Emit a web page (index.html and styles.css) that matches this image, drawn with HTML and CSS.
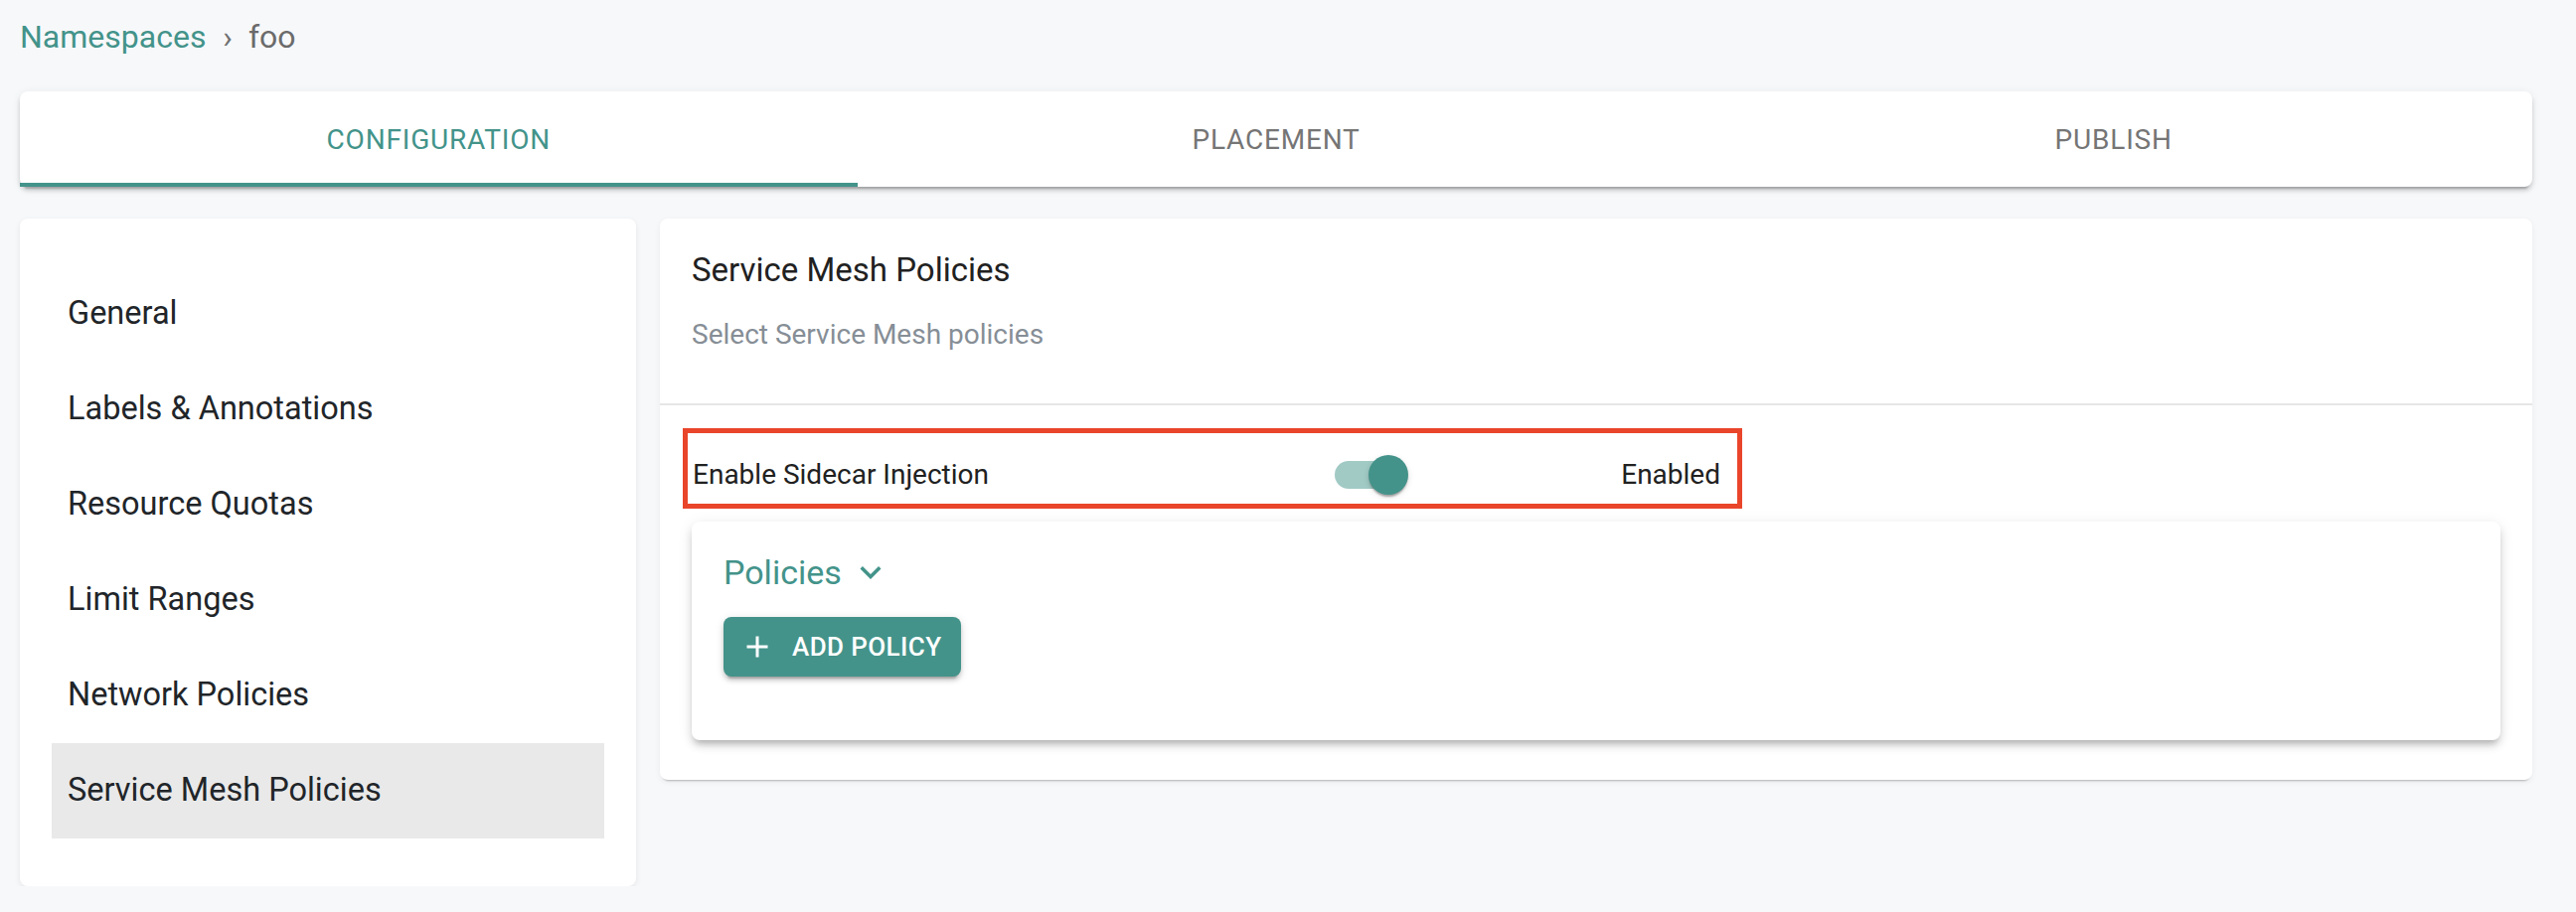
FILE: index.html
```html
<!DOCTYPE html>
<html lang="en">
<head>
    <meta charset="UTF-8">
    <title>Namespace foo</title>
    <link rel="stylesheet" href="styles.css">
</head>
<body>

<div class="page">

    <!-- Breadcrumb -->
    <nav class="crumbs">
        <a href="#">Namespaces</a>
        <span class="sep">›</span>
        <span class="current">foo</span>
    </nav>

    <!-- Wizard tabs -->
    <div class="tabs">
        <div class="tab active">Configuration</div>
        <div class="tab">Placement</div>
        <div class="tab">Publish</div>
    </div>

    <div class="layout">
        <!-- Section menu -->
        <aside class="side-nav">
            <ul>
                <li>General</li>
                <li>Labels &amp; Annotations</li>
                <li>Resource Quotas</li>
                <li>Limit Ranges</li>
                <li>Network Policies</li>
                <li class="selected">Service Mesh Policies</li>
            </ul>
        </aside>

        <!-- Service mesh panel -->
        <section class="panel">
            <div class="panel-head">
                <h2>Service Mesh Policies</h2>
                <p>Select Service Mesh policies</p>
            </div>
            <div class="panel-body">
                <div class="sidecar-row">
                    <span class="sidecar-label">Enable Sidecar Injection</span>
                    <span class="switch"><span class="switch-thumb"></span></span>
                    <span class="sidecar-value">Enabled</span>
                </div>

                <div class="policies-card">
                    <div class="policies-head">
                        <span>Policies</span>
                        <svg class="chevron" viewBox="0 0 24 24"><path d="M16.59 8.59 12 13.17 7.41 8.59 6 10l6 6 6-6z"/></svg>
                    </div>
                    <button class="add-btn" type="button">
                        <svg viewBox="0 0 24 24"><path d="M19 13h-6v6h-2v-6H5v-2h6V5h2v6h6v2z"/></svg>
                        Add Policy
                    </button>
                </div>
            </div>
        </section>
    </div>

</div>

</body>
</html>
```

FILE: styles.css
```css
body {
    margin: 0;
    font-family: Roboto, "Liberation Sans", sans-serif;
    background-color: #f7f8fa;
    color: #212529;
}

.page {
    padding: 17px 44px 0 20px;
}

/* Breadcrumb */
.crumbs {
    font-size: 32px;
    line-height: 40px;
    margin-bottom: 35px;
    color: #6b6b6b;
}

.crumbs a {
    color: #43938a;
    text-decoration: none;
}

.crumbs .sep {
    margin: 0 8px 0 9px;
    color: #707070;
}

/* Tabs */
.tabs {
    display: flex;
    background: #fff;
    border-radius: 8px;
    box-shadow: 0 6px 2px -4px rgba(0, 0, 0, 0.2), 0 4px 4px 0 rgba(0, 0, 0, 0.14), 0 2px 10px 0 rgba(0, 0, 0, 0.08);
    margin-bottom: 32px;
}

.tab {
    flex: 1;
    height: 96px;
    box-sizing: border-box;
    padding-top: 4px;
    border-bottom: 4px solid transparent;
    display: flex;
    align-items: center;
    justify-content: center;
    font-size: 28px;
    letter-spacing: 0.8px;
    text-transform: uppercase;
    color: #757575;
}

.tab.active {
    color: #43938a;
    border-bottom-color: #43938a;
}

/* Layout */
.layout {
    display: flex;
    gap: 24px;
    align-items: flex-start;
}

/* Side menu */
.side-nav {
    width: 620px;
    flex: none;
    background: #fff;
    border-radius: 8px;
    box-shadow: 0 2px 6px rgba(0, 0, 0, 0.08);
}

.side-nav ul {
    list-style: none;
    margin: 0;
    padding: 48px 32px;
}

.side-nav li {
    height: 96px;
    display: flex;
    align-items: center;
    padding: 0 0 2px 16px;
    box-sizing: border-box;
    font-size: 32.5px;
}

.side-nav li.selected {
    background: #e9e9e9;
}

/* Panel */
.panel {
    flex: 1;
    background: #fff;
    border-radius: 8px;
    box-shadow: 0 4px 2px -3px rgba(0, 0, 0, 0.25), 0 2px 6px rgba(0, 0, 0, 0.06);
}

.panel-head {
    padding: 32px 32px 51px;
    border-bottom: 2px solid #e6e6e6;
}

.panel-head h2 {
    margin: 0;
    font-size: 33px;
    font-weight: 400;
    line-height: 40px;
    color: #212121;
}

.panel-head p {
    margin: 27px 0 0;
    font-size: 28px;
    line-height: 36px;
    color: #868e96;
}

.panel-body {
    padding: 23px 32px 40px;
}

/* Highlighted sidecar row */
.sidecar-row {
    margin-left: -9px;
    width: 1066px;
    height: 81px;
    box-sizing: border-box;
    border: 5px solid #e9452b;
    padding: 12px 17px 0 5px;
    display: flex;
    align-items: center;
    font-size: 28px;
    color: #212121;
}

.sidecar-label {
    width: 646px;
    flex: none;
}

.switch {
    position: relative;
    width: 68px;
    height: 28px;
    border-radius: 14px;
    background: #a1cac5;
}

.switch-thumb {
    position: absolute;
    top: -6px;
    left: 34px;
    width: 40px;
    height: 40px;
    border-radius: 50%;
    background: #43938a;
    box-shadow: 0 4px 2px -2px rgba(0, 0, 0, 0.2), 0 2px 2px 0 rgba(0, 0, 0, 0.14), 0 2px 6px 0 rgba(0, 0, 0, 0.12);
}

.sidecar-value {
    margin-left: auto;
}

/* Policies card */
.policies-card {
    margin-top: 13px;
    padding: 30px 32px 64px;
    background: #fff;
    border-radius: 8px;
    box-shadow: 0 6px 6px -4px rgba(0, 0, 0, 0.2), 0 6px 8px 0 rgba(0, 0, 0, 0.12), 0 2px 16px 0 rgba(0, 0, 0, 0.08);
}

.policies-head {
    display: flex;
    align-items: center;
    height: 42px;
    font-size: 34px;
    line-height: 40px;
    color: #43938a;
}

.chevron {
    width: 42px;
    height: 42px;
    margin-left: 8px;
    fill: #43938a;
}

.add-btn {
    margin-top: 24px;
    display: flex;
    align-items: center;
    height: 60px;
    padding: 0 20px 0 16px;
    border: none;
    border-radius: 8px;
    background: #43938a;
    color: #fff;
    font-family: Roboto, "Liberation Sans", sans-serif;
    font-size: 26px;
    font-weight: 500;
    letter-spacing: 0.4px;
    text-transform: uppercase;
    box-shadow: 0 6px 2px -4px rgba(0, 0, 0, 0.2), 0 4px 4px 0 rgba(0, 0, 0, 0.14), 0 2px 10px 0 rgba(0, 0, 0, 0.12);
}

.add-btn svg {
    width: 36px;
    height: 36px;
    margin-right: 17px;
    fill: #fff;
}
```
